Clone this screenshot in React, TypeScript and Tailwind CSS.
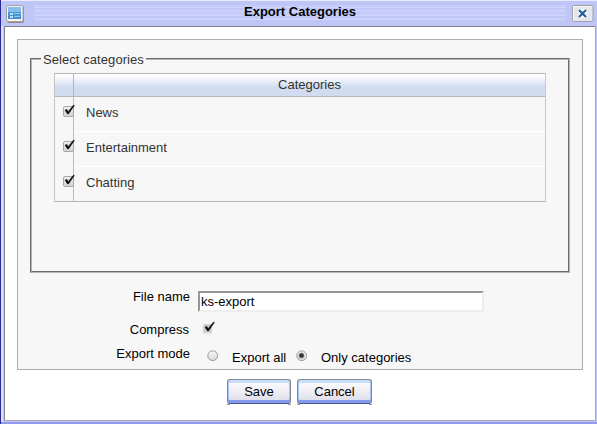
import React from "react";

function CheckMark({ faded = false }: { faded?: boolean }) {
  return (
    <svg width="14" height="15" viewBox="0 0 14 15" className="block shrink-0 overflow-visible">
      <defs>
        <linearGradient id="box" x1="0" y1="0" x2="0" y2="1">
          <stop offset="0" stopColor="#f2f2f2" />
          <stop offset="1" stopColor="#d2d2d2" />
        </linearGradient>
      </defs>
      {faded ? (
        <>
          <rect x="1" y="3" width="9" height="9" rx="1.5" fill="#cfcfcf" />
          <rect x="1" y="12.5" width="10" height="1" fill="#ececec" />
        </>
      ) : (
        <rect x="1.5" y="2.5" width="10" height="10" rx="1.5" fill="url(#box)" stroke="#a8a8a8" />
      )}
      <path d="M3 6.200 4.800 5.200 6.100 7.700 11.500 1.100 12.400 1.500 6.500 10 5.500 10Z" fill="#080808" stroke="#080808" strokeWidth=".45" />
    </svg>
  );
}

function RadioDot({ on = false }: { on?: boolean }) {
  return (
    <svg width="13" height="13" viewBox="0 0 13 13" className="block shrink-0">
      <defs>
        <linearGradient id="dot" x1="0" y1="0" x2="0" y2="1">
          <stop offset="0" stopColor="#f8f8f8" />
          <stop offset="1" stopColor="#d6d6d6" />
        </linearGradient>
      </defs>
      <circle cx="5.700" cy="5.700" r="4.900" fill="url(#dot)" stroke="#9c9c9c" />
      {on && <circle cx="5.500" cy="5.500" r="2.500" fill="#333" stroke="#858585" strokeWidth=".8" />}
    </svg>
  );
}

function WindowIcon() {
  return (
    <svg width="19" height="19" viewBox="0 0 19 19" className="block">
      <rect x="1" y="1" width="17" height="17" rx="2" fill="#8c8787" />
      <rect x=".5" y=".5" width="16.500" height="16" rx="1.500" fill="#f5f2ee" stroke="#a5a2a5" />
      <rect x="2" y="2" width="13" height="12" fill="#4a94d2" />
      <rect x="2" y="2" width="13" height="5" fill="#86bdea" />
      <rect x="2" y="11" width="13" height="3" fill="#3f8aca" />
      <path d="M4 8h3v2H4zM4 11h3v2H4z" fill="#b9defa" />
      <path d="M8 8h6v1H8zM8 11h6v1H8z" fill="#8fc6f0" />
    </svg>
  );
}

function CloseButton() {
  return (
    <svg width="22" height="18" viewBox="0 0 22 18" className="block">
      <rect x=".5" y=".5" width="20.500" height="16" rx="1" fill="#e5e6eb" stroke="#a1a1a8" />
      <path d="M1.500 15.500V1.500H20" fill="none" stroke="#f8f8fb" />
      <path d="m7.500 5 6.500 7m0-7-6.500 7" stroke="#fff" strokeWidth="5" />
      <path d="m7 5 7 7m0-7-7 7" stroke="#235d9b" strokeWidth="2.200" />
    </svg>
  );
}

function Button({ children, width }: { children: string; width: string }) {
  return (
    <div className={`${width} h-[26px] bg-[linear-gradient(to_right,#999_3px,transparent_3px,transparent_calc(100%-3px),#999_calc(100%-3px))] bg-[length:100%_1px] bg-bottom bg-no-repeat`}>
      <button className="block h-[25px] w-full rounded-[3px] border border-[#84898f] border-b-[#4d5b95] bg-linear-to-b from-white to-[#dcdce9] text-[13px] leading-[18px] text-black shadow-[inset_0_-3px_#839be9,inset_1px_0_#a9c4f5,inset_-1px_0_#a9c4f5,inset_0_3px_#c9dcf8]">
        {children}
      </button>
    </div>
  );
}

const categories = ["News", "Entertainment", "Chatting"];

export default function App() {
  return (
    <div className="flex h-[424px] w-[597px] flex-col border-l border-[#29299a] bg-[#bec5f7] font-['Liberation_Sans',Arial,sans-serif] text-[13px] text-black">
      <header className="flex h-[26px] shrink-0 items-start border-t border-[#e9ebff] pl-[5px]">
        <div className="mt-1 w-[19px]"><WindowIcon /></div>
        <div className="mt-1 ml-[9px] h-[15px] w-[532px] bg-[repeating-linear-gradient(to_bottom,#c6cbfa_0px,#c6cbfa_2px,#d0d5fc_2px,#d0d5fc_3px,#bec5f7_3px,#bec5f7_4px)] text-center leading-[14px] font-bold">
          Export Categories
        </div>
        <div className="mt-1 ml-[6px]"><CloseButton /></div>
      </header>

      <div className="flex h-[398px] border-b-2 border-[#9298ed] bg-[#bec5f7]">
        <div className="w-[2px] shrink-0 bg-[#dde0fc]" />
        <main className="ml-px h-[395px] w-[592px] border border-[#858590] border-r-[#aaaab5] border-b-[#aaaab5] bg-white pt-3 pl-3">
          <section className="h-[331px] w-[566px] border border-[#adadad] bg-[#f7f7f7] pl-3">
            <fieldset className="h-[222px] w-[540px] pt-[11px] text-[#333]">
              <div className="mt-[7px] h-[215px] border border-[#6c6c6c] border-r-[#b5b5b5] border-b-[#b5b5b5]">
                <div className="h-[213px] border border-t-[#b5b5b5] border-r-[#6c6c6c] border-b-[#6c6c6c] border-l-[#b5b5b5] pl-[22px]">
                  <div className="relative -top-[8px] -left-[13px] h-[16px] w-[105px] bg-[#f7f7f7] pl-[2px] leading-[16px] tracking-[0.07px] whitespace-nowrap">Select categories</div>
                  <div className="-mt-[3px] w-[492px] border border-[#b6b6b6] border-r-[#c8c8c8] border-l-[#c4c4c4]">
                    <div className="flex h-[23px] border-b border-[#b6b6b6] bg-linear-to-b from-[#fdfdff] from-10% to-[#d1dcf0] to-60%">
                      <div className="w-[19px] border-r border-[#b6b6b6]" />
                      <div className="flex-1 text-center leading-[22px]">Categories</div>
                    </div>
                    {categories.map((name, index) => (
                      <div key={name} className={`flex ${index === 2 ? "h-[34px]" : "h-[35px]"}`}>
                        <div className="w-[19px] border-r border-[#bdbdbd] pt-[7px] pl-[7px]"><div className="relative"><CheckMark /></div></div>
                        <div className={`flex-1 pl-[12px] leading-[32px] ${index < 2 ? "border-b border-white" : ""}`}>{name}</div>
                      </div>
                    ))}
                  </div>
                </div>
              </div>
            </fieldset>

            <div className="mt-[29px] flex h-[22px]">
              <label className="w-[160px] text-right leading-[11px]">File name</label>
              <input className="ml-[8px] block h-[21px] w-[286px] border-2 border-[#979797] border-r-[#eeeeee] border-b-[#eeeeee] bg-white pl-px text-[13px] leading-[17px] outline-none" defaultValue="ks-export" />
            </div>
            <div className="mt-[8px] flex h-[24px]">
              <label className="w-[159px] text-right leading-[17px]">Compress</label>
              <span className="ml-[13px]"><CheckMark faded /></span>
            </div>
            <div className="flex h-[22px]">
              <label className="w-[160px] text-right leading-[18px]">Export mode</label>
              <span className="mt-[5px] ml-[17px]"><RadioDot /></span>
              <span className="ml-[12px] w-[55px] leading-[26px] whitespace-nowrap">Export all</span>
              <span className="mt-[5px] ml-[9px]"><RadioDot on /></span>
              <span className="ml-[12px] leading-[26px]">Only categories</span>
            </div>
          </section>
          <footer className="mt-[9px] ml-[210px] flex gap-[6px]">
            <Button width="w-[64px]">Save</Button>
            <Button width="w-[75px]">Cancel</Button>
          </footer>
        </main>
      </div>
    </div>
  );
}
